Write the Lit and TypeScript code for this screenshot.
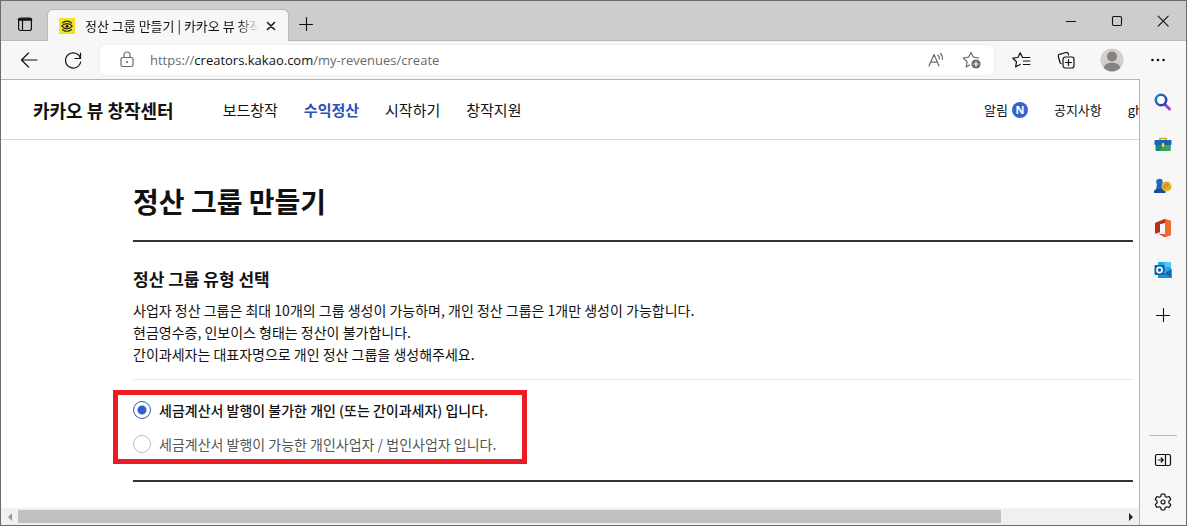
import { LitElement, html, css, svg } from "lit";
import { customElement, state } from "lit/decorators.js";

const stroke = (body: unknown, size = 20) => html`<svg class="ico" width=${size} height=${size} viewBox="0 0 20 20" fill="none" stroke="currentColor" stroke-width="1.2" stroke-linecap="round" stroke-linejoin="round" aria-hidden="true">${body}</svg>`;

const icons = {
  tabs: stroke(svg`<rect x="3.600" y="4" width="12.800" height="12.500" rx="2"/><path d="M4 5.500h12" stroke-width="2.600"/><path d="M7.500 6v10.500"/>`),
  close: stroke(svg`<path d="M6.500 6.500l7 7M13.500 6.500l-7 7" stroke-width="1.500"/>`),
  plus: stroke(svg`<path d="M3.500 10.500h13M10.500 3.500v13" stroke-width="1.1"/>`),
  back: stroke(svg`<path d="M18 10H2.500M9.500 3l-7 7 7 7"/>`),
  reload: stroke(svg`<path d="M17.500 8.500A7.600 7.600 0 1 0 17.600 12M17.500 3v5.500H12" />`),
  lock: stroke(svg`<rect x="4" y="7.500" width="12" height="9" rx="1.500"/><path d="M7 7.500V5a3 3 0 0 1 6 0v2.500"/><circle cx="10" cy="12" r=".5" fill="currentColor"/>`),
  read: stroke(svg`<path d="M3 16L8 4.500 13 16M4.700 12.200h6.600"/><path d="M12 5.200c1.300 1 1.700 2.300 1.400 3.800M14.500 3.500c1.700 1.700 2.300 3.700 1.800 6"/>`),
  favAdd: stroke(svg`<path d="M7.500 14.900L4.200 17l.9-5.300L1.300 8l5.300-.8L9 2.500l2.400 4.700 5.300.8"/><circle cx="14" cy="14" r="4.600" fill="currentColor" stroke="none"/><path d="M11.800 14h4.400M14 11.800v4.400" stroke="#fff"/>`),
  favs: stroke(svg`<path d="M11.500 7.500h-1L8.200 2.800 5.900 7.500l-5.100.7 3.700 3.600-.9 5.100 4.600-2.400"/><path d="M11.500 7.500h6.300M11.300 11h6.500M11.300 14.500h6.500"/>`),
  collections: stroke(svg`<rect x="7" y="7" width="11" height="11" rx="2.200"/><path d="M12.500 9.500v6M9.500 12.500h6"/><path d="M5 13.500l-.8-.5L2.300 6.500a1.800 1.800 0 0 1 1.200-2.200L10 2.500a1.800 1.800 0 0 1 2.200 1.200l.3 1.100"/>`),
  more: stroke(svg`<g fill="currentColor" stroke="none"><circle cx="4.500" cy="10" r="1.300"/><circle cx="10" cy="10" r="1.300"/><circle cx="15.500" cy="10" r="1.300"/></g>`),
  min: stroke(svg`<path d="M5 10.500h10" stroke-linecap="butt" stroke-width="1"/>`),
  max: stroke(svg`<rect x="5.500" y="5.500" width="9" height="9" rx="1.200" stroke-width="1.100"/>`),
  quit: stroke(svg`<path d="M5.200 5.200l10 10M15.200 5.200l-10 10" stroke-width="1.100"/>`),
  panel: stroke(svg`<rect x="2.500" y="4.500" width="15" height="11" rx="1.500"/><path d="M12.500 4.500v11M5.500 10h4.500M8.200 8l2 2-2 2"/>`),
  gear: stroke(svg`<circle cx="10" cy="10" r="2"/><path d="M8.300 2.200q1.700-.6 3.400 0l.5 2.300 1.500.8 2.200-.8q1.400 1.200 1.800 3l-1.800 1.600v1.800l1.800 1.600q-.4 1.800-1.800 3l-2.200-.8-1.500.8-.5 2.300q-1.700.6-3.400 0l-.5-2.300-1.500-.8-2.200.8q-1.400-1.200-1.800-3l1.800-1.600V9.100L2.300 7.500q.4-1.800 1.800-3l2.200.8 1.500-.8z"/>`),
};

const art = (body: unknown) => html`<svg class="ico" width="20" height="20" viewBox="0 0 20 20" aria-hidden="true">${body}</svg>`;

const apps = [
  { name: "Search", icon: art(svg`<defs><linearGradient id="s" x1="0" y1="0" x2="1" y2="1"><stop offset="0" stop-color="#1386c8"/><stop offset="1" stop-color="#2431b0"/></linearGradient></defs><path d="M12 12.500l4.500 4.500" stroke="#9a3ce0" stroke-width="3" stroke-linecap="round"/><circle cx="8" cy="8" r="5.200" fill="#fff" stroke="url(#s)" stroke-width="2.500"/>`) },
  { name: "Shopping", icon: art(svg`<path d="M7 6.500V4.500h6v2" fill="none" stroke="#dca91b" stroke-width="1.700"/><rect x="1.500" y="6" width="17" height="5" rx="1" fill="#1665ae"/><path d="M2.500 11h15v5a1 1 0 0 1-1 1h-13a1 1 0 0 1-1-1z" fill="#198779"/><path d="M10 11h7.500v5a1 1 0 0 1-1 1H7z" fill="#39a35b"/><rect x="8.700" y="9" width="2.600" height="4" rx="1" fill="#f7d33c"/>`) },
  { name: "Games", icon: art(svg`<circle cx="6.500" cy="6" r="3.300" fill="#246bc9"/><path d="M4 8h5l1 6H3z" fill="#2361bf"/><path d="M1 17v-2l2-2h7.500l2 2v2z" fill="#1a4ba0"/><circle cx="13.600" cy="10.500" r="5" fill="#f1bd35"/><path d="M10.500 7.500l6 6m0-6l-6 6M12 6l5.500 5.500M9.500 9l5.500 5.500M15.500 6L10 11.500" stroke="#a96c22" stroke-width=".7"/>`) },
  { name: "Office", icon: art(svg`<path d="M12 .8l6 1.900v14.600l-6 1.900z" fill="#ef6a32"/><path d="M2 5L12 .8v4.100L7 6.200v8l-5 1.500z" fill="#bc2d1c"/><path d="M5 15.500l7 1v2.700z" fill="#d83b22"/>`) },
  { name: "Outlook", icon: art(svg`<rect x="5" y="2" width="13" height="10" fill="#28a8ea"/><path d="M11.500 2H18v5h-6.500z" fill="#50c8f7"/><path d="M5 9l6.500 4L18.500 9v9H5z" fill="#1490df"/><path d="M18.500 9v9L11 13.500z" fill="#0d69b8"/><rect x="1.500" y="5" width="10" height="10" rx="1" fill="#0f5fa9"/><circle cx="6.500" cy="10" r="2.600" fill="none" stroke="#fff" stroke-width="1.600"/>`) },
];

@customElement("app-root")
export class AppRoot extends LitElement {
  static styles = css`
    :host { display: block; height: 100vh; color: #111; font-family: "Noto Sans CJK KR", sans-serif; }
    * { box-sizing: border-box; }
    button { border: 0; background: none; padding: 0; margin: 0; color: inherit; font: inherit; display: grid; place-items: center; }
    a { color: inherit; text-decoration: none; }
    .ico { display: block; flex: none; }
    .window { height: 100%; display: flex; flex-direction: column; border: 1px solid #6c6c6c; background: #f7f7f7; overflow: hidden; }
    .tabbar { height: 40px; flex: none; display: flex; align-items: flex-end; background: #cdcdcd; border-bottom: 1px solid #b9b9b9; }
    .tabbar > button { width: 34px; height: 32px; }
    .tabbar .menu { margin-left: 7px; margin-right: 5px; }
    .tab { width: 242px; height: 32px; margin-bottom: -1px; display: flex; align-items: center; padding: 0 7px 0 11px; background: #f7f7f7; border: 1px solid #bababa; border-bottom: 0; border-radius: 6px 6px 0 0; }
    .tab-title { flex: 1; min-width: 0; margin: 0 2px 0 10px; overflow: hidden; white-space: nowrap; font-size: 13px; line-height: 20px; mask-image: linear-gradient(90deg, #000 88%, transparent); }
    .controls { margin-left: auto; height: 100%; display: flex; }
    .controls button { width: 46px; }
    .toolbar { height: 38px; flex: none; display: flex; align-items: center; padding: 0 18px 0 11px; }
    .toolbar > button { width: 34px; margin-right: 10px; }
    .address { flex: 1; min-width: 0; height: 30px; display: flex; align-items: center; padding: 0 12px 0 17px; background: #fff; border-radius: 5px; box-shadow: 0 0 2px #ddd; color: #6b6b6b; }
    .url { flex: 1; margin-left: 13px; font: 13px/20px "Open Sans", sans-serif; white-space: nowrap; }
    .url b { font-weight: 400; color: #111; }
    .address button + button { margin-left: 16px; }
    .tools { display: flex; align-items: center; gap: 24px; margin-left: 18px; }
    .body { flex: 1; min-height: 0; display: flex; }
    .view { flex: 1; min-width: 0; display: flex; flex-direction: column; background: #fff; border-top: 1px solid #b6b6b6; border-right: 1px solid #b6b6b6; }
    .page { flex: 1; min-height: 0; overflow: hidden; }
    .site { height: 60px; display: flex; align-items: center; padding-left: 32px; border-bottom: 1px solid #d9d9d9; overflow: hidden; white-space: nowrap; }
    .logo { font-size: 18px; line-height: 24px; font-weight: 700; }
    .nav { display: flex; gap: 26px; margin-left: 49px; font-size: 15px; line-height: 20px; }
    .nav .on { color: #2c4fb8; font-weight: 700; }
    .user { width: 155px; margin-left: auto; display: flex; font-size: 13px; line-height: 20px; gap: 26px; }
    .notice { display: flex; align-items: center; gap: 4px; }
    .badge { width: 16px; height: 16px; border-radius: 50%; background: #3a61cc; color: #fff; font: 700 11px/16px "Open Sans", sans-serif; text-align: center; }
    .main { padding: 40px 6px 0 132px; }
    h1 { margin: 0; padding-bottom: 18px; font-size: 28px; line-height: 42px; font-weight: 700; border-bottom: 2px solid #333; }
    .section { padding-top: 24px; border-bottom: 2px solid #333; padding-bottom: 16px; }
    h2 { margin: 0; font-size: 17px; line-height: 26px; font-weight: 700; }
    .desc { margin: 7px 0 0; padding-bottom: 14px; font-size: 14px; line-height: 22px; border-bottom: 1px solid #e9e9e9; }
    .choices { width: fit-content; margin: 10px 0 0 -20px; border: 5px solid #ed1c24; padding: 5px 26px 5px 15px; display: grid; gap: 14px; min-width: 0; }
    .choice { display: flex; align-items: center; gap: 8px; font-size: 14px; line-height: 20px; color: #555; }
    .choice.on { color: #111; font-weight: 500; }
    .choice input { appearance: none; width: 18px; height: 18px; margin: 0; border: 1px solid #bbb; border-radius: 50%; background: #fff; }
    .choice input:checked { border-color: #3458b8; background: radial-gradient(circle, #355dcc 4px, #fff 5px); }
    .scroll { height: 17px; flex: none; display: flex; align-items: center; justify-content: space-between; background: #f0f0f0; }
    .scroll button { width: 17px; height: 17px; color: #222; }
    .scroll .off { color: #999; }
    .track { flex: 1; height: 13px; }
    .thumb { width: 89%; height: 13px; background: #c1c1c1; }
    .side { width: 46px; flex: none; display: flex; flex-direction: column; align-items: center; padding: 13px 0; gap: 22px; }
    .side .add { margin-top: 3px; }
    .rule { width: 28px; margin: auto 0 -8px; border: 0; border-top: 1px solid #b5b5b5; }
  `;

  @state() private choice = 0;

  private choices = [
    "세금계산서 발행이 불가한 개인 (또는 간이과세자) 입니다.",
    "세금계산서 발행이 가능한 개인사업자 / 법인사업자 입니다.",
  ];

  render() {
    return html`<div class="window">
      <div class="tabbar">
        <button class="menu" aria-label="Tabs">${icons.tabs}</button>
        <div class="tab">
          <svg class="ico" width="16" height="16" viewBox="0 0 16 16" aria-hidden="true"><path fill="#f4e12c" d="M0 0h16v16H0z"/><g fill="none" stroke="#292715" stroke-width="1.100" stroke-linecap="round"><path d="M3.500 5C6 2.500 10 2.500 12.500 5M3.500 11.500c2.500 2.300 6.500 2.300 9 0"/><path d="M2.800 8.200C5.500 4.800 10.500 4.800 13.200 8.200 10.500 11.600 5.500 11.600 2.800 8.200z"/></g><circle cx="8" cy="8.200" r="1.500" fill="#292715"/></svg>
          <span class="tab-title">정산 그룹 만들기 | 카카오 뷰 창작센터</span>
          <button aria-label="Close tab">${icons.close}</button>
        </div>
        <button aria-label="New tab">${icons.plus}</button>
        <div class="controls">
          <button aria-label="Minimize">${icons.min}</button>
          <button aria-label="Maximize">${icons.max}</button>
          <button aria-label="Close">${icons.quit}</button>
        </div>
      </div>
      <div class="toolbar">
        <button aria-label="Back">${icons.back}</button>
        <button aria-label="Refresh">${icons.reload}</button>
        <div class="address">
          ${icons.lock}
          <span class="url">https://<b>creators.kakao.com</b>/my-revenues/create</span>
          <button aria-label="Read aloud">${icons.read}</button>
          <button aria-label="Add to favorites">${icons.favAdd}</button>
        </div>
        <div class="tools">
          <button aria-label="Favorites">${icons.favs}</button>
          <button aria-label="Collections">${icons.collections}</button>
          <button aria-label="Profile"><svg class="ico" width="24" height="24" viewBox="0 0 24 24" aria-hidden="true"><circle cx="12" cy="12" r="11.500" fill="#d1cfcd"/><circle cx="12" cy="8.500" r="5" fill="#86827f"/><path d="M4 20c0-7 16-7 16 0-4 4.500-12 4.500-16 0z" fill="#86827f"/></svg></button>
          <button aria-label="More">${icons.more}</button>
        </div>
      </div>
      <div class="body">
        <div class="view">
          <div class="page">
            <header class="site">
              <a class="logo" href="#">카카오 뷰 창작센터</a>
              <nav class="nav">
                <a href="#">보드창작</a><a class="on" href="#">수익정산</a><a href="#">시작하기</a><a href="#">창작지원</a>
              </nav>
              <div class="user">
                <a class="notice" href="#">알림<span class="badge">N</span></a><a href="#">공지사항</a><a href="#">gh</a>
              </div>
            </header>
            <main class="main">
              <h1>정산 그룹 만들기</h1>
              <section class="section">
                <h2>정산 그룹 유형 선택</h2>
                <p class="desc">사업자 정산 그룹은 최대 10개의 그룹 생성이 가능하며, 개인 정산 그룹은 1개만 생성이 가능합니다.<br>현금영수증, 인보이스 형태는 정산이 불가합니다.<br>간이과세자는 대표자명으로 개인 정산 그룹을 생성해주세요.</p>
                <fieldset class="choices" aria-label="정산 그룹 유형 선택">
                  ${this.choices.map((text, i) => html`<label class="choice ${i === this.choice ? "on" : ""}"><input type="radio" name="type" .checked=${i === this.choice} @change=${() => (this.choice = i)}>${text}</label>`)}
                </fieldset>
              </section>
            </main>
          </div>
          <div class="scroll">
            <button class="off" aria-label="Scroll left"><svg class="ico" width="6" height="8" viewBox="0 0 6 8"><path d="M5 0v8L1 4z" fill="currentColor"/></svg></button>
            <div class="track"><div class="thumb"></div></div>
            <button aria-label="Scroll right"><svg class="ico" width="6" height="8" viewBox="0 0 6 8"><path d="M1 0v8l4-4z" fill="currentColor"/></svg></button>
          </div>
        </div>
        <aside class="side">
          ${apps.map((a) => html`<button aria-label=${a.name}>${a.icon}</button>`)}
          <button class="add" aria-label="Add">${icons.plus}</button>
          <hr class="rule">
          <button aria-label="Hide sidebar">${icons.panel}</button>
          <button aria-label="Settings">${icons.gear}</button>
        </aside>
      </div>
    </div>`;
  }
}
